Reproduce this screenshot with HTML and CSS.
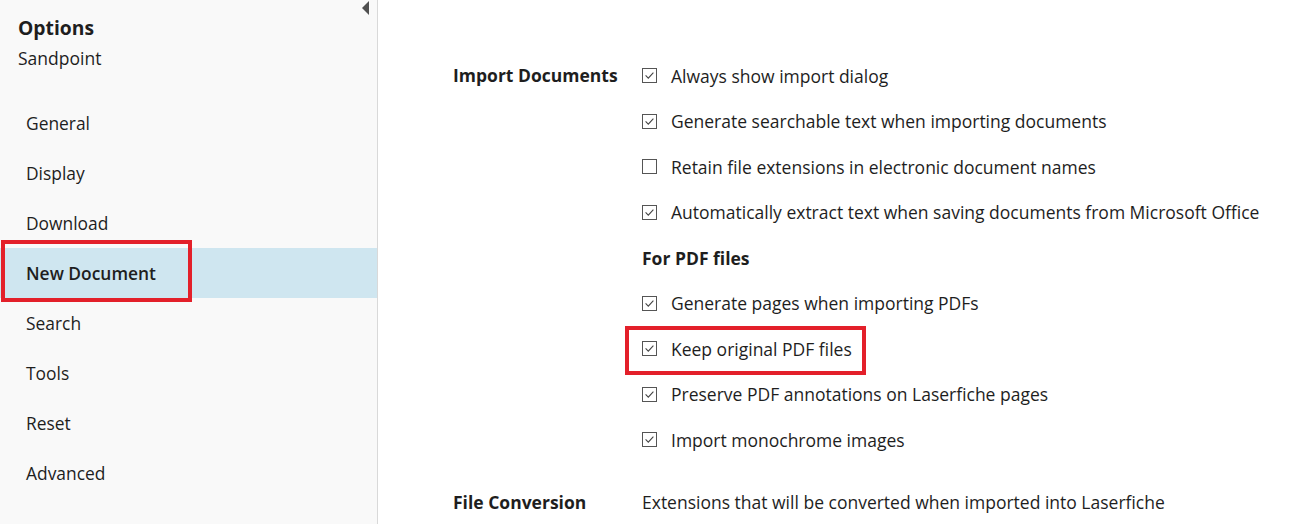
FILE: index.html
```html
<!DOCTYPE html>
<html>
<head>
<meta charset="utf-8">
<link rel="stylesheet" href="styles.css">
</head>
<body>
<div class="app">
  <aside class="sidebar">
    <span class="collapse"></span>
    <div class="side-head">
      <div class="title">Options</div>
      <div class="subtitle">Sandpoint</div>
    </div>
    <nav class="nav">
      <div class="nav-item">General</div>
      <div class="nav-item">Display</div>
      <div class="nav-item">Download</div>
      <div class="nav-item active">New Document<span class="mark mark-nav"></span></div>
      <div class="nav-item">Search</div>
      <div class="nav-item">Tools</div>
      <div class="nav-item">Reset</div>
      <div class="nav-item">Advanced</div>
    </nav>
  </aside>
  <main class="main">
    <section class="group">
      <div class="group-label">Import Documents</div>
      <div class="group-body">
        <div class="opt"><span class="cb checked"><svg viewBox="0 0 15 15"><rect x="0.5" y="0.5" width="14" height="14" fill="#fff" stroke="#555"/><polyline points="3.6,7.4 6.3,10.1 11.4,4.6" fill="none" stroke="#444" stroke-width="1.1"/></svg></span>Always show import dialog</div>
        <div class="opt"><span class="cb checked"><svg viewBox="0 0 15 15"><rect x="0.5" y="0.5" width="14" height="14" fill="#fff" stroke="#555"/><polyline points="3.6,7.4 6.3,10.1 11.4,4.6" fill="none" stroke="#444" stroke-width="1.1"/></svg></span>Generate searchable text when importing documents</div>
        <div class="opt"><span class="cb"><svg viewBox="0 0 15 15"><rect x="0.5" y="0.5" width="14" height="14" fill="#fff" stroke="#555"/></svg></span>Retain file extensions in electronic document names</div>
        <div class="opt"><span class="cb checked"><svg viewBox="0 0 15 15"><rect x="0.5" y="0.5" width="14" height="14" fill="#fff" stroke="#555"/><polyline points="3.6,7.4 6.3,10.1 11.4,4.6" fill="none" stroke="#444" stroke-width="1.1"/></svg></span>Automatically extract text when saving documents from Microsoft Office</div>
        <div class="opt subhead">For PDF files</div>
        <div class="opt"><span class="cb checked"><svg viewBox="0 0 15 15"><rect x="0.5" y="0.5" width="14" height="14" fill="#fff" stroke="#555"/><polyline points="3.6,7.4 6.3,10.1 11.4,4.6" fill="none" stroke="#444" stroke-width="1.1"/></svg></span>Generate pages when importing PDFs</div>
        <div class="opt"><span class="cb checked"><svg viewBox="0 0 15 15"><rect x="0.5" y="0.5" width="14" height="14" fill="#fff" stroke="#555"/><polyline points="3.6,7.4 6.3,10.1 11.4,4.6" fill="none" stroke="#444" stroke-width="1.1"/></svg></span>Keep original PDF files<span class="mark mark-opt"></span></div>
        <div class="opt"><span class="cb checked"><svg viewBox="0 0 15 15"><rect x="0.5" y="0.5" width="14" height="14" fill="#fff" stroke="#555"/><polyline points="3.6,7.4 6.3,10.1 11.4,4.6" fill="none" stroke="#444" stroke-width="1.1"/></svg></span>Preserve PDF annotations on Laserfiche pages</div>
        <div class="opt"><span class="cb checked"><svg viewBox="0 0 15 15"><rect x="0.5" y="0.5" width="14" height="14" fill="#fff" stroke="#555"/><polyline points="3.6,7.4 6.3,10.1 11.4,4.6" fill="none" stroke="#444" stroke-width="1.1"/></svg></span>Import monochrome images</div>
      </div>
    </section>
    <section class="group group-conv">
      <div class="group-label">File Conversion</div>
      <div class="group-body">
        <div class="opt">Extensions that will be converted when imported into Laserfiche</div>
      </div>
    </section>
  </main>
</div>
</body>
</html>
```

FILE: styles.css
```css
html, body {
  margin: 0;
  padding: 0;
  background: #fff;
}
body {
  font-family: "Open Sans", "Noto Sans", sans-serif;
  color: #1e1e1e;
  font-size: 17.5px;
}
.app {
  display: flex;
  height: 524px;
  overflow: hidden;
}
.sidebar {
  position: relative;
  width: 377px;
  flex: 0 0 377px;
  background: #f9f9f9;
  border-right: 1px solid #d9d9d9;
}
.collapse {
  position: absolute;
  top: 1px;
  right: 8px;
  width: 0;
  height: 0;
  border-top: 7px solid transparent;
  border-bottom: 7px solid transparent;
  border-right: 7px solid #505050;
}
.side-head {
  padding: 13px 0 25px 18px;
}
.title {
  font-weight: 700;
  font-size: 19.3px;
  line-height: 30px;
}
.subtitle {
  font-size: 17.5px;
  line-height: 30px;
}
.nav-item {
  position: relative;
  height: 50px;
  line-height: 50px;
  padding-left: 26px;
  font-size: 17.4px;
}
.nav-item.active {
  background: #cfe6f0;
  font-weight: 600;
}
.mark {
  position: absolute;
  border: 4px solid #e3202a;
  box-sizing: border-box;
  pointer-events: none;
}
.mark-nav {
  left: 1px;
  top: -8px;
  width: 191px;
  height: 62px;
}
.main {
  flex: 1;
  padding: 53px 0 0 75px;
}
.group {
  display: grid;
  grid-template-columns: 189px 1fr;
}
.group-label {
  font-weight: 700;
  height: 45.5px;
  line-height: 45.5px;
}
.opt {
  position: relative;
  display: flex;
  align-items: center;
  height: 45.5px;
  white-space: nowrap;
}
.opt.subhead {
  font-weight: 700;
}
.cb {
  width: 15px;
  height: 15px;
  margin-right: 14px;
  display: inline-flex;
}
.cb svg {
  width: 15px;
  height: 15px;
  display: block;
}
.mark-opt {
  left: -17px;
  top: 0;
  width: 241px;
  height: 49px;
}
.group-conv {
  margin-top: 17px;
}
```
